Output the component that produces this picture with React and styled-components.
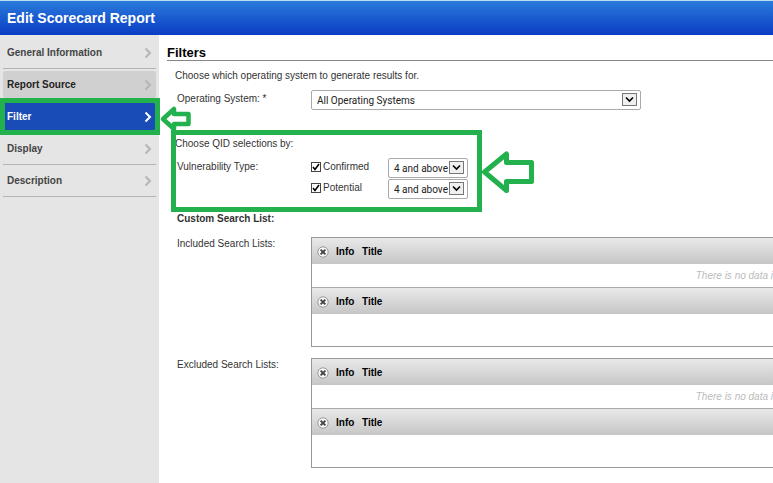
import React from 'react';
import styled, { createGlobalStyle } from 'styled-components';

const GlobalStyle = createGlobalStyle`
  * {
    box-sizing: border-box;
  }

  body {
    margin: 0;
    background: white;
    color: #333;
    font-family: "Liberation Sans", Arial, sans-serif;
    font-size: 10px;
    line-height: 12px;
  }
`

const Page = styled.div`
  display: flex;
  flex-direction: column;
  min-height: 100vh;
`

const Header = styled.header`
  display: flex;
  align-items: center;
  height: 35px;
  padding: 0 7px;
  border-top: 1px solid #b9dcf2;
  background: linear-gradient(#2a7bdc, #0a3cc4);
`

const PageTitle = styled.h1`
  margin: 0;
  font-size: 14px;
  line-height: 16px;
  color: white;
`

const Body = styled.div`
  display: flex;
  flex: 1;
`

const Sidebar = styled.nav`
  flex: none;
  width: 159px;
  padding: 2px 3px;
  background: #e5e5e5;
`

const NavItem = styled.div`
  position: relative;
  height: 32px;
  padding: ${({ $variant }) => ($variant ? '2px 0' : '0')};
  border-bottom: 1px solid ${({ $variant }) => ($variant ? 'transparent' : '#b4b4b4')};
`

const navBackground = {
  visited: '#d0d0d0',
  active: '#1a4cb8',
}

const navColor = {
  visited: '#222',
  active: 'white',
}

const NavLink = styled.a`
  display: flex;
  align-items: center;
  justify-content: space-between;
  height: 100%;
  padding: 0 4px;
  border-radius: 2px;
  background: ${({ $variant }) => navBackground[$variant] || 'none'};
  color: ${({ $variant }) => navColor[$variant] || '#444'};
  font-weight: 700;
  text-decoration: none;

  svg {
    color: ${({ $variant }) => ($variant === 'active' ? 'white' : '#b5b5b5')};
  }
`

const Main = styled.main`
  flex: 1;
  min-width: 0;
  padding: 10px 0 15px 8px;
`

const Heading = styled.h2`
  margin: 0 0 9px;
  border-bottom: 1px solid #888;
  color: black;
  font-size: 13px;
  line-height: 15px;
`

const Section = styled.section`
  padding-left: 8px;
`

const Intro = styled.p`
  margin: 0;
`

const Row = styled.div`
  display: grid;
  grid-template-columns: 134px 1fr;
  padding-left: 2px;
  margin-top: ${({ $gap }) => $gap}px;
`

const RowLabel = styled.span`
  padding-top: ${({ $top }) => $top}px;
`

const Options = styled.div`
  display: grid;
  gap: 1px;
`

const Option = styled.div`
  display: flex;
`

const CheckLabel = styled.label`
  display: flex;
  align-items: center;
  gap: 2px;
  width: 77px;
  height: 17px;
`

const Checkbox = styled.input`
  appearance: none;
  width: 10px;
  height: 10px;
  margin: 0;
  border: 1px solid #444;
  background: white;

  &:checked {
    background: url("data:image/svg+xml,%3Csvg xmlns='http://www.w3.org/2000/svg' viewBox='0 0 8 8'%3E%3Cpath d='M1 4l2 2.5L7 1' fill='none' stroke='black' stroke-width='1.6'/%3E%3C/svg%3E");
  }
`

const SelectBox = styled.div`
  position: relative;
  width: ${({ $wide }) => ($wide ? '330px' : '80px')};
  height: 20px;
`

const Select = styled.select`
  appearance: none;
  width: 100%;
  height: 100%;
  padding: 0 18px 0 5px;
  border: 1px solid #aaa;
  border-radius: 2px;
  background: white;
  color: #222;
  font-family: Roboto, sans-serif;
  font-size: 10px;
`

const DropButton = styled.span`
  position: absolute;
  top: 3px;
  right: 4px;
  display: flex;
  align-items: center;
  justify-content: center;
  width: 15px;
  height: 13px;
  border: 1px solid #777;
  background: #efefef;
  pointer-events: none;
`

const SubHeading = styled.h3`
  margin: 0 0 0 2px;
  font-size: 10px;
  line-height: 12px;
`

const ListBox = styled.div`
  height: 110px;
  border: 1px solid #999;
  border-right: 0;
`

const Table = styled.table`
  width: 100%;
  border-collapse: collapse;

  & + & {
    border-top: 1px solid #aaa;
  }
`

const HeadCell = styled.th`
  height: 26px;
  padding: 2px 0 0;
  width: ${({ $width }) => $width || 'auto'};
  color: black;
  text-align: left;
`

const HeadRow = styled.tr`
  background: linear-gradient(#e9e9e9, #c6c6c6);
`

const EmptyCell = styled.td`
  height: 23px;
  padding: 0;
  color: #bbb;
  font-style: italic;
  text-align: right;
`

const ClearButton = styled.button`
  display: block;
  width: 12px;
  height: 12px;
  margin-left: 5px;
  padding: 0;
  border: 0;
  background: none;
`

const Marked = styled.div`
  position: relative;
  width: 311px;
  height: 82px;
  margin: 20px 0 1px 4px;
  padding: 8px 0 0 4px;
`

const Highlight = styled.div`
  position: absolute;
  inset: ${({ $inset }) => $inset};
  border: 5px solid #22b14c;
  pointer-events: none;
`

const Arrow = styled.svg`
  position: absolute;
  left: 100%;
  top: ${({ $top }) => $top}px;
  z-index: 1;
  fill: white;
  stroke: #22b14c;
  stroke-linejoin: round;
`

function Chevron() {
  return (
    <svg width="8" height="12" viewBox="0 0 8 12" fill="none" stroke="currentColor" strokeWidth="2">
      <path d="M1.5 1.5L6 6L1.5 10.5" />
    </svg>
  );
}

function SmallArrow() {
  return (
    <Arrow $top={4} width="36" height="28" viewBox="0 0 36 28">
      <path d="M7 14L18 4V9H32.5V19H18V24Z" strokeWidth="4.5" />
    </Arrow>
  );
}

function BigArrow() {
  return (
    <Arrow $top={20} width="54" height="44" viewBox="0 0 54 44">
      <path d="M2.5 22L24.5 4V12.5H49.5V31.5H24.5V40.5Z" strokeWidth="5" />
    </Arrow>
  );
}

function Dropdown({ label, options, wide }) {
  return (
    <SelectBox $wide={wide}>
      <Select aria-label={label}>
        {options.map((option) => <option key={option}>{option}</option>)}
      </Select>
      <DropButton>
        <svg width="9" height="7" viewBox="0 0 9 7" fill="none" stroke="black" strokeWidth="1.6">
          <path d="M1 1.5L4.5 5L8 1.5" />
        </svg>
      </DropButton>
    </SelectBox>
  );
}

function ListTable({ children }) {
  return (
    <Table>
      <thead>
        <HeadRow>
          <HeadCell $width="24px">
            <ClearButton aria-label="Clear list">
              <svg width="12" height="12" viewBox="0 0 12 12">
                <circle cx="6" cy="6" r="5.2" fill="#f6f6f6" stroke="#999" />
                <path d="M3.6 3.6L8.4 8.4M8.4 3.6L3.6 8.4" stroke="#444" strokeWidth="1.9" />
              </svg>
            </ClearButton>
          </HeadCell>
          <HeadCell $width="26px">Info</HeadCell>
          <HeadCell>Title</HeadCell>
        </HeadRow>
      </thead>
      {children}
    </Table>
  );
}

function SearchLists() {
  return (
    <ListBox>
      <ListTable>
        <tbody>
          <tr>
            <EmptyCell colSpan={3}>There is no data i</EmptyCell>
          </tr>
        </tbody>
      </ListTable>
      <ListTable />
    </ListBox>
  );
}

const navItems = [
  { name: 'General Information' },
  { name: 'Report Source', variant: 'visited' },
  { name: 'Filter', variant: 'active' },
  { name: 'Display' },
  { name: 'Description' },
]

const severities = ['4 and above', '3 and above', '5 only']

export default function App() {
  return (
    <Page>
      <GlobalStyle />
      <Header>
        <PageTitle>Edit Scorecard Report</PageTitle>
      </Header>
      <Body>
        <Sidebar>
          {navItems.map(({ name, variant }) => (
            <NavItem key={name} $variant={variant}>
              <NavLink href="#" $variant={variant}>
                {name}
                <Chevron />
              </NavLink>
              {variant === 'active' && (
                <>
                  <Highlight $inset="-3px -4px -3px -3px" />
                  <SmallArrow />
                </>
              )}
            </NavItem>
          ))}
        </Sidebar>
        <Main>
          <Heading>Filters</Heading>
          <Section>
            <Intro>Choose which operating system to generate results for.</Intro>
            <Row $gap={8}>
              <RowLabel $top={3}>Operating System: *</RowLabel>
              <Dropdown wide label="Operating System" options={['All Operating Systems']} />
            </Row>
          </Section>
          <Marked>
            <Intro>Choose QID selections by:</Intro>
            <Row $gap={8}>
              <RowLabel $top={3}>Vulnerability Type:</RowLabel>
              <Options>
                {['Confirmed', 'Potential'].map((type) => (
                  <Option key={type}>
                    <CheckLabel>
                      <Checkbox type="checkbox" defaultChecked />
                      {type}
                    </CheckLabel>
                    <Dropdown label={`${type} severity`} options={severities} />
                  </Option>
                ))}
              </Options>
            </Row>
            <Highlight $inset="0" />
            <BigArrow />
          </Marked>
          <Section>
            <SubHeading>Custom Search List:</SubHeading>
            <Row $gap={12}>
              <RowLabel $top={1}>Included Search Lists:</RowLabel>
              <SearchLists />
            </Row>
            <Row $gap={11}>
              <RowLabel $top={1}>Excluded Search Lists:</RowLabel>
              <SearchLists />
            </Row>
          </Section>
        </Main>
      </Body>
    </Page>
  );
}
